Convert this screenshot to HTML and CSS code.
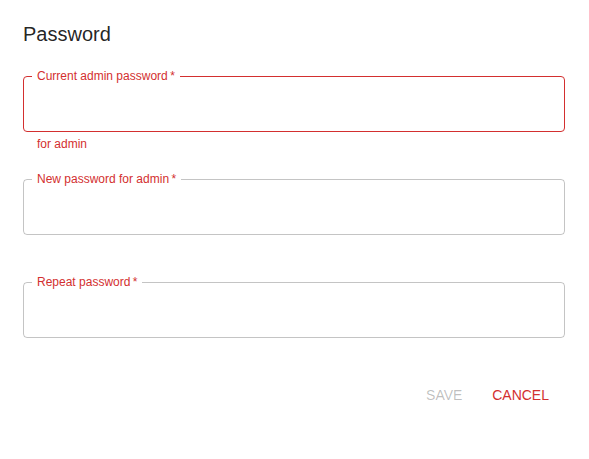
FILE: index.html
```html
<!DOCTYPE html>
<html lang="en">
<head>
<meta charset="utf-8">
<title>Password</title>
<link rel="stylesheet" href="styles.css">
</head>
<body>
<div class="dialog">
  <h2 class="title">Password</h2>
  <form class="content">
    <div class="field">
      <fieldset class="outline error">
        <legend class="label">Current admin password&thinsp;*</legend>
        <input class="input" type="password" aria-label="Current admin password">
      </fieldset>
      <p class="helper">for admin</p>
    </div>
    <div class="field">
      <fieldset class="outline">
        <legend class="label">New password for admin&thinsp;*</legend>
        <input class="input" type="password" aria-label="New password for admin">
      </fieldset>
      <p class="helper"></p>
    </div>
    <div class="field">
      <fieldset class="outline">
        <legend class="label">Repeat password&thinsp;*</legend>
        <input class="input" type="password" aria-label="Repeat password">
      </fieldset>
      <p class="helper"></p>
    </div>
  </form>
  <div class="actions">
    <button class="btn disabled" type="button" disabled>Save</button>
    <button class="btn primary" type="button">Cancel</button>
  </div>
</div>
</body>
</html>
```
FILE: styles.css
```css
* { box-sizing: border-box; }
html, body {
  margin: 0;
  background: #fff;
  font-family: "Liberation Sans", Arial, sans-serif;
}
.dialog {
  width: 589px;
  height: 459px;
  display: flex;
  flex-direction: column;
}
.title {
  margin: 0;
  padding: 18px 24px 20px 23px;
  font-size: 20px;
  line-height: 32px;
  font-weight: 400;
  color: rgba(0,0,0,0.87);
}
.content {
  padding: 0 24px 0 23px;
  display: flex;
  flex-direction: column;
  gap: 18px;
}
.field {
  display: flex;
  flex-direction: column;
}
.outline {
  margin: 0;
  padding: 0 8px;
  min-inline-size: 0;
  border: 1px solid rgba(0,0,0,0.23);
  border-radius: 4px;
  height: 62px;
}
.outline.error {
  border-color: #d32f2f;
}
.label {
  padding: 0 5px;
  font-size: 12px;
  line-height: 12px;
  color: #d32f2f;
}
.input {
  display: block;
  width: 100%;
  height: 49px;
  border: 0;
  outline: none;
  background: transparent;
  font: inherit;
  font-size: 16px;
  padding: 0 6px;
}
.helper {
  margin: 2px 14px 0;
  height: 21px;
  font-size: 12px;
  line-height: 20px;
  color: #d32f2f;
}
.actions {
  display: flex;
  justify-content: flex-end;
  gap: 8px;
  padding: 16px 32px 0 0;
}
.btn {
  min-width: 64px;
  height: 36px;
  padding: 6px 8px;
  border: 0;
  background: transparent;
  font-family: inherit;
  font-size: 14px;
  font-weight: 400;
  text-transform: uppercase;
  border-radius: 4px;
  cursor: pointer;
}
.btn.disabled {
  color: rgba(0,0,0,0.26);
  cursor: default;
}
.btn.primary {
  color: #d32f2f;
}
```
